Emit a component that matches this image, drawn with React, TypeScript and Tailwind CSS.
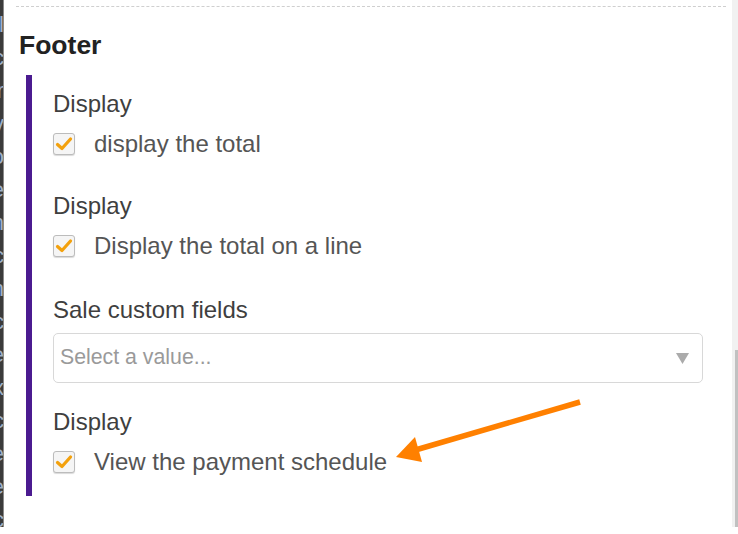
import React from "react";

const font = { fontFamily: '"Liberation Sans", Arial, sans-serif' };

function Check() {
  return (
    <div className="w-[22px] h-[22px] rounded-[3px] border border-[#bcbcbc] bg-[#f5f5f5] shadow-[0_1px_1px_rgba(0,0,0,0.15)] flex items-center justify-center shrink-0">
      <svg width="18" height="16" viewBox="0 0 18 16">
        <path d="M2.5 8.5 L7 12.5 L15.5 3" fill="none" stroke="#f3a10d" strokeWidth="3.2" strokeLinecap="round" strokeLinejoin="round" />
      </svg>
    </div>
  );
}

function CheckRow({ label }: { label: string }) {
  return (
    <div className="h-[24px] flex items-center gap-[19px] mt-[14px]">
      <Check />
      <span className="text-[24px] leading-[24px] text-[#555]">{label}</span>
    </div>
  );
}

function Label({ children }: { children: React.ReactNode }) {
  return <div className="h-[28px] leading-[28px] text-[24px] text-[#3f3f3f]">{children}</div>;
}

export default function App() {
  const frags = ["l", "c", "r", "v", "o", "e", "n", "c", "n", "c", "e", "x", "c", "e", "e", "c"];
  return (
    <div className="w-[738px] h-[534px] bg-white relative overflow-hidden" style={font}>
      <div className="h-[527px] flex">
        <div className="w-[4px] bg-[#3b3b3b] border-r border-[#8a8a8a] overflow-hidden">
          <div className="w-[16px] -ml-[12px] flex flex-col items-end pt-[8px] text-[22px] leading-[33px] text-[#9fb0c8]">
            {frags.map((f, i) => (
              <span key={i}>{f}</span>
            ))}
          </div>
        </div>
        <div className="flex-1 flex flex-col pl-[12px] pr-[6px]">
          <div className="mt-[6px] border-t border-dashed border-[#cfcfcf]" />
          <div className="pl-[3px] mt-[23px] h-[30px] leading-[30px] text-[26.5px] font-bold text-[#222]">Footer</div>
          <div className="mt-[15px] ml-[10px] border-l-[6px] border-[#4b1b90] pl-[21px] pt-[15px] pb-[22px] mr-[23px]">
            <Label>Display</Label>
            <CheckRow label="display the total" />
            <div className="mt-[36px]">
              <Label>Display</Label>
            </div>
            <CheckRow label="Display the total on a line" />
            <div className="mt-[38px]">
              <Label>Sale custom fields</Label>
            </div>
            <div className="mt-[9px] h-[50px] border-[1.5px] border-[#d8d8d8] rounded-[5px] flex items-center justify-between pl-[6px] pr-[13px]">
              <span className="text-[21.3px] text-[#9a9a9a]">Select a value...</span>
              <svg width="13" height="11" viewBox="0 0 13 11">
                <path d="M0 0 H13 L6.5 11 Z" fill="#ababab" />
              </svg>
            </div>
            <div className="mt-[25px]">
              <Label>Display</Label>
            </div>
            <CheckRow label="View the payment schedule" />
          </div>
        </div>
        <div className="w-[6px] bg-[#f1f1f1] flex flex-col items-end">
          <div className="mt-[350px] w-[3px] flex-1 bg-[#c1c1c1]" />
        </div>
      </div>
      <svg className="absolute left-0 top-0 pointer-events-none" width="738" height="534">
        <line x1="580" y1="402" x2="412" y2="451" stroke="#ff8000" strokeWidth="5.5" />
        <path d="M396 457 L415 437 L422 462 Z" fill="#ff8000" />
      </svg>
    </div>
  );
}
